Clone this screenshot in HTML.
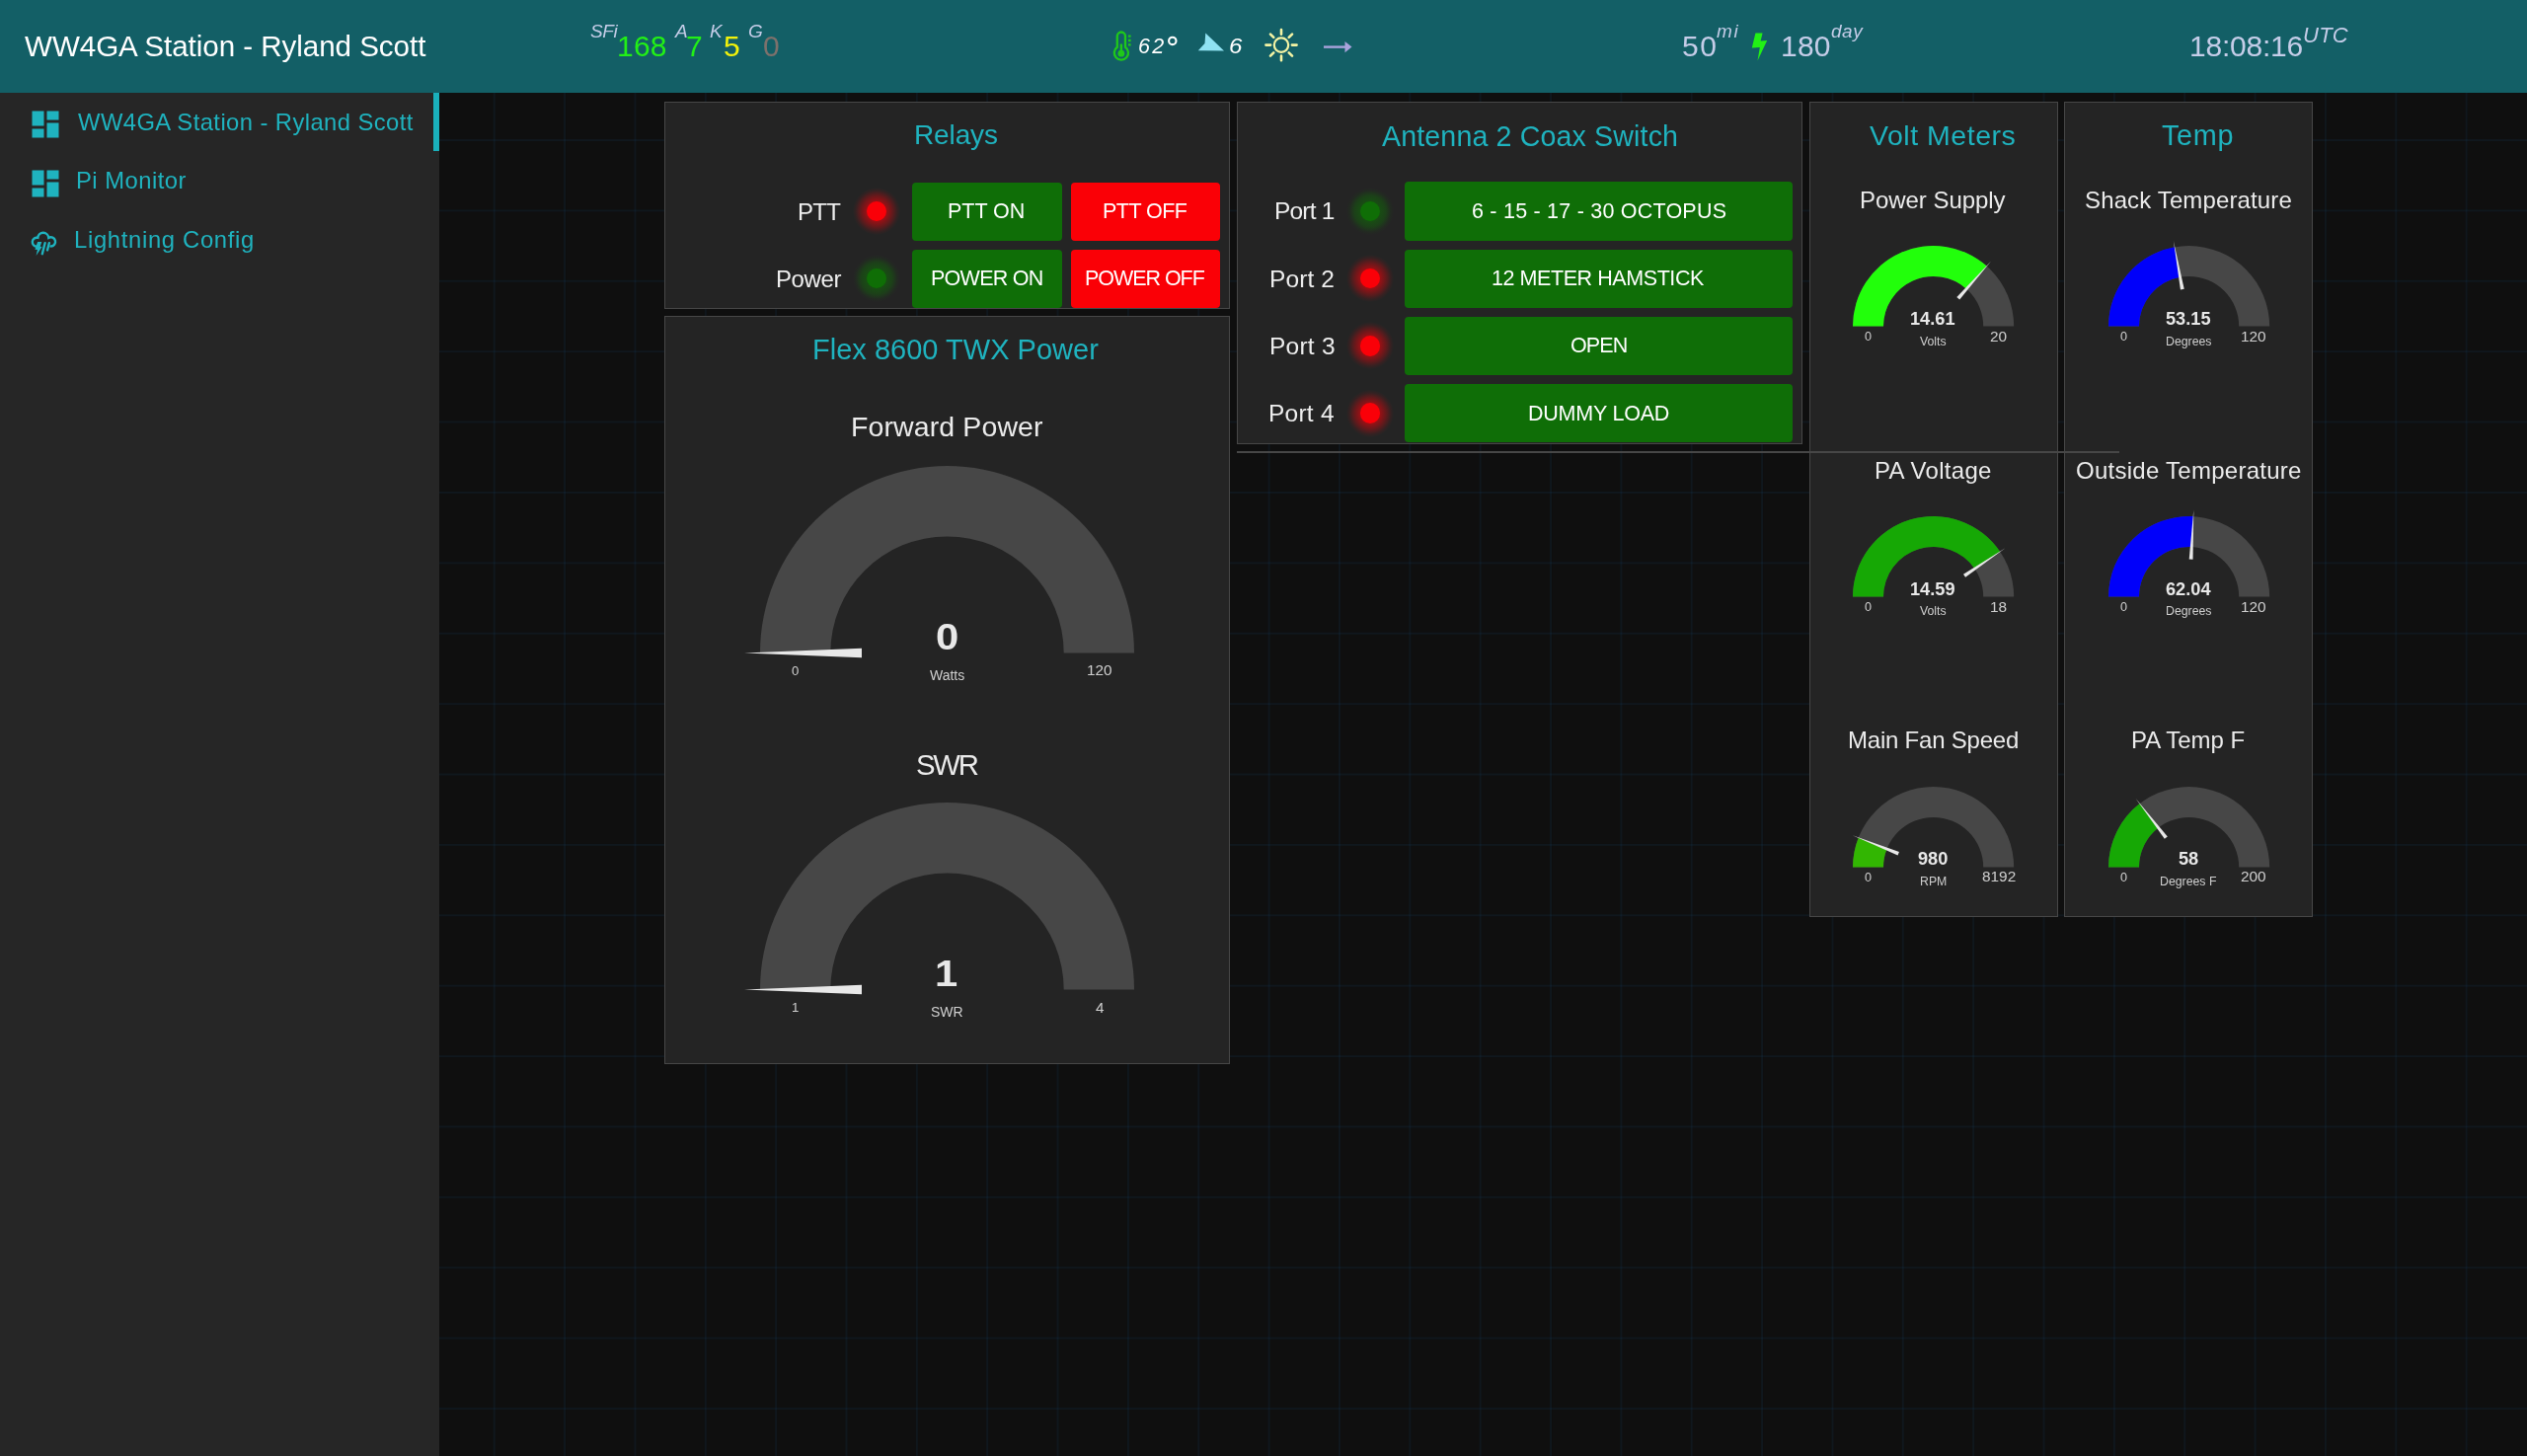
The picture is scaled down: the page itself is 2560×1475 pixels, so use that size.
<!DOCTYPE html>
<html><head><meta charset="utf-8"><title>WW4GA Station - Ryland Scott</title>
<style>
html,body{margin:0;padding:0;width:2560px;height:1475px;overflow:hidden;background:#0f0f0f;font-family:"Liberation Sans", sans-serif;}
.b{position:absolute;}
.t{position:absolute;white-space:nowrap;line-height:1;will-change:transform;}
</style></head><body>
<svg class="b" style="left:0;top:0" width="2560" height="1475"><g fill="rgb(20,80,120)" fill-opacity="0.13"><rect x="499.70" y="94" width="2" height="1381"/><rect x="571.05" y="94" width="2" height="1381"/><rect x="642.41" y="94" width="2" height="1381"/><rect x="713.76" y="94" width="2" height="1381"/><rect x="785.12" y="94" width="2" height="1381"/><rect x="856.48" y="94" width="2" height="1381"/><rect x="927.83" y="94" width="2" height="1381"/><rect x="999.19" y="94" width="2" height="1381"/><rect x="1070.54" y="94" width="2" height="1381"/><rect x="1141.89" y="94" width="2" height="1381"/><rect x="1213.25" y="94" width="2" height="1381"/><rect x="1284.61" y="94" width="2" height="1381"/><rect x="1355.96" y="94" width="2" height="1381"/><rect x="1427.32" y="94" width="2" height="1381"/><rect x="1498.67" y="94" width="2" height="1381"/><rect x="1570.03" y="94" width="2" height="1381"/><rect x="1641.38" y="94" width="2" height="1381"/><rect x="1712.74" y="94" width="2" height="1381"/><rect x="1784.09" y="94" width="2" height="1381"/><rect x="1855.45" y="94" width="2" height="1381"/><rect x="1926.80" y="94" width="2" height="1381"/><rect x="1998.16" y="94" width="2" height="1381"/><rect x="2069.51" y="94" width="2" height="1381"/><rect x="2140.87" y="94" width="2" height="1381"/><rect x="2212.22" y="94" width="2" height="1381"/><rect x="2283.58" y="94" width="2" height="1381"/><rect x="2354.93" y="94" width="2" height="1381"/><rect x="2426.29" y="94" width="2" height="1381"/><rect x="2497.64" y="94" width="2" height="1381"/><rect x="445" y="141.00" width="2115" height="2"/><rect x="445" y="212.39" width="2115" height="2"/><rect x="445" y="283.78" width="2115" height="2"/><rect x="445" y="355.17" width="2115" height="2"/><rect x="445" y="426.56" width="2115" height="2"/><rect x="445" y="497.95" width="2115" height="2"/><rect x="445" y="569.34" width="2115" height="2"/><rect x="445" y="640.73" width="2115" height="2"/><rect x="445" y="712.12" width="2115" height="2"/><rect x="445" y="783.51" width="2115" height="2"/><rect x="445" y="854.90" width="2115" height="2"/><rect x="445" y="926.29" width="2115" height="2"/><rect x="445" y="997.68" width="2115" height="2"/><rect x="445" y="1069.07" width="2115" height="2"/><rect x="445" y="1140.46" width="2115" height="2"/><rect x="445" y="1211.85" width="2115" height="2"/><rect x="445" y="1283.24" width="2115" height="2"/><rect x="445" y="1354.63" width="2115" height="2"/><rect x="445" y="1426.02" width="2115" height="2"/></g></svg>
<div class="b" style="left:0.00px;top:0.00px;width:2560.00px;height:94.00px;background:#135f66;"></div>
<div class="t" style="left:25.30px;top:32.34px;font-size:29.6px;color:#fff;font-style:normal;font-weight:normal;letter-spacing:-0.055px;">WW4GA Station - Ryland Scott</div>
<div class="t" style="left:598.13px;top:21.82px;font-size:19px;color:#c5cde8;font-style:italic;font-weight:normal;letter-spacing:-0.405px;">SFi</div>
<div class="t" style="left:625.00px;top:32.00px;font-size:30px;color:#22f016;font-style:normal;font-weight:normal;letter-spacing:0.2px;">168</div>
<div class="t" style="left:683.95px;top:21.82px;font-size:19px;color:#c5cde8;font-style:italic;font-weight:normal;letter-spacing:0px;">A</div>
<div class="t" style="left:695.30px;top:32.00px;font-size:30px;color:#22f016;font-style:normal;font-weight:normal;letter-spacing:0px;">7</div>
<div class="t" style="left:719.43px;top:21.82px;font-size:19px;color:#c5cde8;font-style:italic;font-weight:normal;letter-spacing:0px;">K</div>
<div class="t" style="left:733.00px;top:32.00px;font-size:30px;color:#f2f20a;font-style:normal;font-weight:normal;letter-spacing:0px;">5</div>
<div class="t" style="left:757.75px;top:21.82px;font-size:19px;color:#c5cde8;font-style:italic;font-weight:normal;letter-spacing:0px;">G</div>
<div class="t" style="left:772.50px;top:32.00px;font-size:30px;color:#7d716c;font-style:normal;font-weight:normal;letter-spacing:0px;">0</div>
<svg class="b" style="left:1120px;top:28px" width="36" height="40" viewBox="1120 28 36 40"><g fill="none" stroke="#1fc81a" stroke-width="2.3"><path d="M1131.8 47.8 V36.6 a4.1 4.1 0 0 1 8.2 0 V47.8 a7.1 7.1 0 1 1 -8.2 0 Z"/><path d="M1143 36.6h2.6M1143 41h2.6M1143 45.4h2.6"/></g><g fill="#1fc81a"><rect x="1134.7" y="44.5" width="2.4" height="9"/><circle cx="1135.9" cy="54.2" r="3.4"/></g></svg>
<div class="t" style="left:1153.21px;top:36.50px;font-size:21.5px;color:#fff;font-style:italic;font-weight:normal;letter-spacing:2.24px;">62</div>
<svg class="b" style="left:1180px;top:33px" width="16" height="16" viewBox="1180 33 16 16"><circle cx="1187.8" cy="41.4" r="3.7" fill="none" stroke="#fff" stroke-width="2.1"/></svg>
<svg class="b" style="left:1205px;top:28px" width="40" height="30" viewBox="1205 28 40 30"><path d="M1221.3 33.4 L1240 51.6 L1213.8 51.2 L1220.5 44 Z" fill="#8fe2f2"/></svg>
<div class="t" style="left:1244.96px;top:36.50px;font-size:21.5px;color:#fff;font-style:italic;font-weight:normal;letter-spacing:0px;transform:scaleX(1.12);transform-origin:0 0;">6</div>
<svg class="b" style="left:1275px;top:22px" width="46" height="48" viewBox="1275 22 46 48"><g fill="none" stroke="#f4f4a4" stroke-linecap="round"><circle cx="1298" cy="45.6" r="7.2" stroke-width="2.2"/><path d="M1308.90 45.60L1313.60 45.60M1305.71 53.31L1309.03 56.63M1298.00 56.50L1298.00 61.20M1290.29 53.31L1286.97 56.63M1287.10 45.60L1282.40 45.60M1290.29 37.89L1286.97 34.57M1298.00 34.70L1298.00 30.00M1305.71 37.89L1309.03 34.57" stroke-width="2.6"/></g></svg>
<svg class="b" style="left:1335px;top:36px" width="40" height="24" viewBox="1335 36 40 24"><path d="M1341 47.6 H1364" stroke="#a9a3dc" stroke-width="2.4"/><path d="M1362.5 41.9 L1369.5 47.6 L1362.5 53.3 Z" fill="#a9a3dc"/></svg>
<div class="t" style="left:1703.60px;top:32.00px;font-size:30px;color:#c5cde8;font-style:normal;font-weight:normal;letter-spacing:1.5px;">50</div>
<div class="t" style="left:1739.12px;top:21.82px;font-size:19px;color:#c5cde8;font-style:italic;font-weight:normal;letter-spacing:1.55px;">mi</div>
<svg class="b" style="left:1770px;top:30px" width="24" height="34" viewBox="1770 30 24 34"><path d="M1778.4 33.4 L1785.6 33.4 L1783.6 41.4 L1790.2 41 L1780.5 61.6 L1782.8 48 L1774.8 48.6 Z" fill="#22f016"/></svg>
<div class="t" style="left:1803.60px;top:32.00px;font-size:30px;color:#c5cde8;font-style:normal;font-weight:normal;letter-spacing:0.25px;">180</div>
<div class="t" style="left:1854.83px;top:21.82px;font-size:19px;color:#c5cde8;font-style:italic;font-weight:normal;letter-spacing:0.515px;">day</div>
<div class="t" style="left:2217.80px;top:31.90px;font-size:30px;color:#c5cde8;font-style:normal;font-weight:normal;letter-spacing:-0.214px;">18:08:16</div>
<div class="t" style="left:2333.46px;top:25.28px;font-size:22px;color:#c5cde8;font-style:italic;font-weight:normal;letter-spacing:0.26px;">UTC</div>
<div class="b" style="left:0.00px;top:94.00px;width:445.00px;height:1381.00px;background:#262626;"></div>
<div class="b" style="left:439.00px;top:94.00px;width:6.00px;height:59.00px;background:#1ab0bb;"></div>
<svg class="b" style="left:28.1px;top:108.35px" width="36" height="36" viewBox="0 0 24 24"><path d="M13,3V9H21V3M13,21H21V11H13M3,21H11V15H3M3,13H11V3H3V13Z" fill="#1fb3bf"/></svg>
<svg class="b" style="left:28.1px;top:167.9px" width="36" height="36" viewBox="0 0 24 24"><path d="M13,3V9H21V3M13,21H21V11H13M3,21H11V15H3M3,13H11V3H3V13Z" fill="#1fb3bf"/></svg>
<svg class="b" style="left:26px;top:228px" width="40" height="36" viewBox="26 228 40 36"><g fill="none" stroke="#1fb3bf" stroke-width="2.4" stroke-linecap="round"><path d="M37.3 249.7 A4.5 4.5 0 1 1 38.32 240.82 A5.5 5.5 0 0 1 49.28 240.87 A4.6 4.6 0 1 1 51.5 249.5"/><path d="M45.6 246.2 L42.8 257.2 M49.8 246.2 L48 253.4"/></g><path d="M38.1 245.0 H42.3 L40.7 249.7 L42.6 250.1 L36.6 259.0 L37.9 252.9 L35.4 252.7 Z" fill="#1fb3bf"/></svg>
<div class="t" style="left:78.50px;top:112.25px;font-size:23.8px;color:#1fb3bf;font-style:normal;font-weight:normal;letter-spacing:0.421px;">WW4GA Station - Ryland Scott</div>
<div class="t" style="left:76.90px;top:171.45px;font-size:23.8px;color:#1fb3bf;font-style:normal;font-weight:normal;letter-spacing:0.471px;">Pi Monitor</div>
<div class="t" style="left:74.50px;top:230.85px;font-size:23.8px;color:#1fb3bf;font-style:normal;font-weight:normal;letter-spacing:0.686px;">Lightning Config</div>
<div class="b" style="left:673.00px;top:103.10px;width:573.20px;height:210.30px;background:#242424;border:1px solid #474747;box-sizing:border-box;"></div>
<div class="b" style="left:673.00px;top:320.10px;width:573.20px;height:757.50px;background:#242424;border:1px solid #474747;box-sizing:border-box;"></div>
<div class="b" style="left:1252.60px;top:103.10px;width:573.50px;height:347.10px;background:#242424;border:1px solid #474747;box-sizing:border-box;"></div>
<div class="b" style="left:1832.50px;top:103.10px;width:252.10px;height:826.10px;background:#242424;border:1px solid #474747;box-sizing:border-box;"></div>
<div class="b" style="left:2091.20px;top:103.10px;width:252.10px;height:826.10px;background:#242424;border:1px solid #474747;box-sizing:border-box;"></div>
<div class="b" style="left:1253.00px;top:457.00px;width:894.00px;height:2.00px;background:#474747;"></div>
<div class="t" style="left:926.06px;top:123.30px;font-size:28px;color:#1fb3bf;font-style:normal;font-weight:normal;letter-spacing:-0.124px;">Relays</div>
<div class="t" style="left:808.38px;top:202.98px;font-size:24px;color:#eee;font-style:normal;font-weight:normal;letter-spacing:-0.73px;">PTT</div>
<div class="t" style="left:785.78px;top:271.28px;font-size:24px;color:#eee;font-style:normal;font-weight:normal;letter-spacing:-0.415px;">Power</div>
<div class="b" style="left:864.20px;top:189.80px;width:48.00px;height:48.00px;background:radial-gradient(circle closest-side, rgba(250,0,8,0.55) 10px, rgba(250,0,8,0.3) 16px, rgba(250,0,8,0.08) 21px, rgba(250,0,8,0) 24px);"></div>
<div class="b" style="left:878.00px;top:203.60px;width:20.40px;height:20.40px;background:#fa0008;border-radius:50%;"></div>
<div class="b" style="left:864.20px;top:258.00px;width:48.00px;height:48.00px;background:radial-gradient(circle closest-side, rgba(15,110,6,0.55) 10px, rgba(15,110,6,0.38) 16px, rgba(15,110,6,0.08) 21px, rgba(15,110,6,0) 24px);"></div>
<div class="b" style="left:878.00px;top:271.80px;width:20.40px;height:20.40px;background:#0f6e06;border-radius:50%;"></div>
<div class="b" style="left:923.90px;top:184.50px;width:151.70px;height:59.40px;background:#0f6e07;border-radius:4px;"></div>
<div class="t" style="left:960.48px;top:203.60px;font-size:21.5px;color:#fff;font-style:normal;font-weight:normal;letter-spacing:-0.047px;">PTT ON</div>
<div class="b" style="left:1084.50px;top:184.50px;width:151.70px;height:59.40px;background:#fa0006;border-radius:4px;"></div>
<div class="t" style="left:1116.88px;top:203.50px;font-size:21.5px;color:#fff;font-style:normal;font-weight:normal;letter-spacing:-0.541px;">PTT OFF</div>
<div class="b" style="left:923.90px;top:253.00px;width:151.70px;height:59.40px;background:#0f6e07;border-radius:4px;"></div>
<div class="t" style="left:942.68px;top:271.90px;font-size:21.5px;color:#fff;font-style:normal;font-weight:normal;letter-spacing:-0.726px;">POWER ON</div>
<div class="b" style="left:1084.50px;top:253.00px;width:151.70px;height:59.40px;background:#fa0006;border-radius:4px;"></div>
<div class="t" style="left:1099.18px;top:271.90px;font-size:21.5px;color:#fff;font-style:normal;font-weight:normal;letter-spacing:-1.049px;">POWER OFF</div>
<div class="t" style="left:1399.70px;top:123.59px;font-size:28.6px;color:#1fb3bf;font-style:normal;font-weight:normal;letter-spacing:0.138px;">Antenna 2 Coax Switch</div>
<div class="t" style="left:1291.04px;top:202.46px;font-size:24.5px;color:#eee;font-style:normal;font-weight:normal;letter-spacing:-0.806px;">Port 1</div>
<div class="b" style="left:1364.00px;top:190.00px;width:48.00px;height:48.00px;background:radial-gradient(circle closest-side, rgba(15,110,6,0.55) 10px, rgba(15,110,6,0.38) 16px, rgba(15,110,6,0.08) 21px, rgba(15,110,6,0) 24px);"></div>
<div class="b" style="left:1377.80px;top:203.80px;width:20.40px;height:20.40px;background:#0f6e06;border-radius:50%;"></div>
<div class="b" style="left:1423.00px;top:184.40px;width:392.80px;height:59.40px;background:#0f6e07;border-radius:4px;"></div>
<div class="t" style="left:1490.52px;top:203.60px;font-size:21.5px;color:#fff;font-style:normal;font-weight:normal;letter-spacing:0.222px;">6 - 15 - 17 - 30 OCTOPUS</div>
<div class="t" style="left:1286.44px;top:270.69px;font-size:24.5px;color:#eee;font-style:normal;font-weight:normal;letter-spacing:0.114px;">Port 2</div>
<div class="b" style="left:1364.00px;top:258.20px;width:48.00px;height:48.00px;background:radial-gradient(circle closest-side, rgba(250,0,8,0.55) 10px, rgba(250,0,8,0.3) 16px, rgba(250,0,8,0.08) 21px, rgba(250,0,8,0) 24px);"></div>
<div class="b" style="left:1377.80px;top:272.00px;width:20.40px;height:20.40px;background:#fa0008;border-radius:50%;"></div>
<div class="b" style="left:1423.00px;top:252.63px;width:392.80px;height:59.40px;background:#0f6e07;border-radius:4px;"></div>
<div class="t" style="left:1511.48px;top:271.97px;font-size:21.5px;color:#fff;font-style:normal;font-weight:normal;letter-spacing:-0.429px;">12 METER HAMSTICK</div>
<div class="t" style="left:1285.84px;top:338.92px;font-size:24.5px;color:#eee;font-style:normal;font-weight:normal;letter-spacing:0.234px;">Port 3</div>
<div class="b" style="left:1364.00px;top:326.40px;width:48.00px;height:48.00px;background:radial-gradient(circle closest-side, rgba(250,0,8,0.55) 10px, rgba(250,0,8,0.3) 16px, rgba(250,0,8,0.08) 21px, rgba(250,0,8,0) 24px);"></div>
<div class="b" style="left:1377.80px;top:340.20px;width:20.40px;height:20.40px;background:#fa0008;border-radius:50%;"></div>
<div class="b" style="left:1423.00px;top:320.86px;width:392.80px;height:59.40px;background:#0f6e07;border-radius:4px;"></div>
<div class="t" style="left:1590.72px;top:340.34px;font-size:21.5px;color:#fff;font-style:normal;font-weight:normal;letter-spacing:-0.883px;">OPEN</div>
<div class="t" style="left:1285.34px;top:407.15px;font-size:24.5px;color:#eee;font-style:normal;font-weight:normal;letter-spacing:0.236px;">Port 4</div>
<div class="b" style="left:1364.00px;top:394.60px;width:48.00px;height:48.00px;background:radial-gradient(circle closest-side, rgba(250,0,8,0.55) 10px, rgba(250,0,8,0.3) 16px, rgba(250,0,8,0.08) 21px, rgba(250,0,8,0) 24px);"></div>
<div class="b" style="left:1377.80px;top:408.40px;width:20.40px;height:20.40px;background:#fa0008;border-radius:50%;"></div>
<div class="b" style="left:1423.00px;top:389.09px;width:392.80px;height:59.40px;background:#0f6e07;border-radius:4px;"></div>
<div class="t" style="left:1547.88px;top:408.71px;font-size:21.5px;color:#fff;font-style:normal;font-weight:normal;letter-spacing:-0.229px;">DUMMY LOAD</div>
<div class="t" style="left:823.08px;top:340.05px;font-size:29px;color:#1fb3bf;font-style:normal;font-weight:normal;letter-spacing:0.016px;">Flex 8600 TWX Power</div>
<div class="t" style="left:861.72px;top:418.07px;font-size:28.5px;color:#ebebeb;font-style:normal;font-weight:normal;letter-spacing:0.111px;">Forward Power</div>
<svg class="b" style="left:739.90px;top:442.00px" width="439.00" height="249.50" viewBox="739.90 442.00 439.00 249.50"><path d="M769.90 661.50 A189.5 189.5 0 0 1 1148.90 661.50 L1077.60 661.50 A118.2 118.2 0 0 0 841.20 661.50 Z" fill="#474747"/><path d="M872.90 656.75 L753.90 661.50 L872.90 666.25 Z" fill="#e8e8e8"/></svg>
<div class="t" style="left:947.91px;top:627.93px;font-size:36px;color:#e8e8e8;font-style:normal;font-weight:bold;letter-spacing:0px;transform:scaleX(1.16);transform-origin:0 0;">0</div>
<div class="t" style="left:942.04px;top:676.75px;font-size:14px;color:#cfcfcf;font-style:normal;font-weight:normal;letter-spacing:0px;">Watts</div>
<div class="t" style="left:801.90px;top:672.63px;font-size:13.2px;color:#cfcfcf;font-style:normal;font-weight:normal;letter-spacing:0px;">0</div>
<div class="t" style="left:1101.02px;top:671.35px;font-size:15.3px;color:#cfcfcf;font-style:normal;font-weight:normal;letter-spacing:0px;">120</div>
<div class="t" style="left:928.23px;top:759.90px;font-size:29.3px;color:#ebebeb;font-style:normal;font-weight:normal;letter-spacing:-2.169px;">SWR</div>
<svg class="b" style="left:739.90px;top:783.20px" width="439.00" height="249.50" viewBox="739.90 783.20 439.00 249.50"><path d="M769.90 1002.70 A189.5 189.5 0 0 1 1148.90 1002.70 L1077.60 1002.70 A118.2 118.2 0 0 0 841.20 1002.70 Z" fill="#474747"/><path d="M872.90 997.95 L753.90 1002.70 L872.90 1007.45 Z" fill="#e8e8e8"/></svg>
<div class="t" style="left:947.28px;top:969.13px;font-size:36px;color:#e8e8e8;font-style:normal;font-weight:bold;letter-spacing:0px;transform:scaleX(1.16);transform-origin:0 0;">1</div>
<div class="t" style="left:943.09px;top:1017.95px;font-size:14px;color:#cfcfcf;font-style:normal;font-weight:normal;letter-spacing:0px;">SWR</div>
<div class="t" style="left:801.71px;top:1013.83px;font-size:13.2px;color:#cfcfcf;font-style:normal;font-weight:normal;letter-spacing:0px;">1</div>
<div class="t" style="left:1109.89px;top:1012.55px;font-size:15.3px;color:#cfcfcf;font-style:normal;font-weight:normal;letter-spacing:0px;">4</div>
<div class="t" style="left:1894.41px;top:122.87px;font-size:28.5px;color:#1fb3bf;font-style:normal;font-weight:normal;letter-spacing:0.522px;">Volt Meters</div>
<div class="t" style="left:2190.22px;top:122.62px;font-size:28.8px;color:#1fb3bf;font-style:normal;font-weight:normal;letter-spacing:0.689px;">Temp</div>
<div class="t" style="left:1883.73px;top:190.98px;font-size:24px;color:#ebebeb;font-style:normal;font-weight:normal;letter-spacing:-0.042px;">Power Supply</div>
<svg class="b" style="left:1846.90px;top:219.40px" width="223.20" height="141.60" viewBox="1846.90 219.40 223.20 141.60"><path d="M1876.90 331.00 A81.6 81.6 0 0 1 2040.10 331.00 L2009.10 331.00 A50.6 50.6 0 0 0 1907.90 331.00 Z" fill="#474747"/><path d="M1876.90 331.00 A81.6 81.6 0 0 1 2012.56 269.88 L1992.02 293.10 A50.6 50.6 0 0 0 1907.90 331.00 Z" fill="#22ff0b"/><path d="M1985.10 303.79 L2016.80 265.08 L1982.25 301.28 Z" fill="#e8e8e8"/></svg>
<div class="t" style="left:1935.39px;top:314.19px;font-size:18.2px;color:#e8e8e8;font-style:normal;font-weight:bold;letter-spacing:0px;">14.61</div>
<div class="t" style="left:1945.34px;top:339.59px;font-size:12.3px;color:#cfcfcf;font-style:normal;font-weight:normal;letter-spacing:0px;">Volts</div>
<div class="t" style="left:1888.87px;top:335.23px;font-size:12.6px;color:#cfcfcf;font-style:normal;font-weight:normal;letter-spacing:0px;">0</div>
<div class="t" style="left:2015.90px;top:332.86px;font-size:15.4px;color:#cfcfcf;font-style:normal;font-weight:normal;letter-spacing:0px;">20</div>
<div class="t" style="left:2112.30px;top:190.98px;font-size:24px;color:#ebebeb;font-style:normal;font-weight:normal;letter-spacing:0.135px;">Shack Temperature</div>
<svg class="b" style="left:2105.70px;top:219.40px" width="223.20" height="141.60" viewBox="2105.70 219.40 223.20 141.60"><path d="M2135.70 331.00 A81.6 81.6 0 0 1 2298.90 331.00 L2267.90 331.00 A50.6 50.6 0 0 0 2166.70 331.00 Z" fill="#474747"/><path d="M2135.70 331.00 A81.6 81.6 0 0 1 2202.74 250.71 L2208.27 281.21 A50.6 50.6 0 0 0 2166.70 331.00 Z" fill="#0000fa"/><path d="M2212.39 293.27 L2201.60 244.41 L2208.65 293.95 Z" fill="#e8e8e8"/></svg>
<div class="t" style="left:2194.46px;top:314.19px;font-size:18.2px;color:#e8e8e8;font-style:normal;font-weight:bold;letter-spacing:0px;">53.15</div>
<div class="t" style="left:2193.81px;top:339.59px;font-size:12.3px;color:#cfcfcf;font-style:normal;font-weight:normal;letter-spacing:0px;">Degrees</div>
<div class="t" style="left:2147.67px;top:335.23px;font-size:12.6px;color:#cfcfcf;font-style:normal;font-weight:normal;letter-spacing:0px;">0</div>
<div class="t" style="left:2270.23px;top:332.86px;font-size:15.4px;color:#cfcfcf;font-style:normal;font-weight:normal;letter-spacing:0px;">120</div>
<div class="t" style="left:1898.93px;top:464.63px;font-size:24px;color:#ebebeb;font-style:normal;font-weight:normal;letter-spacing:0.304px;">PA Voltage</div>
<svg class="b" style="left:1846.90px;top:493.05px" width="223.20" height="141.60" viewBox="1846.90 493.05 223.20 141.60"><path d="M1876.90 604.65 A81.6 81.6 0 0 1 2040.10 604.65 L2009.10 604.65 A50.6 50.6 0 0 0 1907.90 604.65 Z" fill="#474747"/><path d="M1876.90 604.65 A81.6 81.6 0 0 1 2026.07 558.90 L2000.40 576.28 A50.6 50.6 0 0 0 1907.90 604.65 Z" fill="#16a805"/><path d="M1991.03 584.92 L2031.37 555.31 L1988.90 581.77 Z" fill="#e8e8e8"/></svg>
<div class="t" style="left:1935.48px;top:587.84px;font-size:18.2px;color:#e8e8e8;font-style:normal;font-weight:bold;letter-spacing:0px;">14.59</div>
<div class="t" style="left:1945.34px;top:613.24px;font-size:12.3px;color:#cfcfcf;font-style:normal;font-weight:normal;letter-spacing:0px;">Volts</div>
<div class="t" style="left:1888.87px;top:608.88px;font-size:12.6px;color:#cfcfcf;font-style:normal;font-weight:normal;letter-spacing:0px;">0</div>
<div class="t" style="left:2015.74px;top:606.51px;font-size:15.4px;color:#cfcfcf;font-style:normal;font-weight:normal;letter-spacing:0px;">18</div>
<div class="t" style="left:2103.10px;top:464.63px;font-size:24px;color:#ebebeb;font-style:normal;font-weight:normal;letter-spacing:0.262px;">Outside Temperature</div>
<svg class="b" style="left:2105.70px;top:493.05px" width="223.20" height="141.60" viewBox="2105.70 493.05 223.20 141.60"><path d="M2135.70 604.65 A81.6 81.6 0 0 1 2298.90 604.65 L2267.90 604.65 A50.6 50.6 0 0 0 2166.70 604.65 Z" fill="#474747"/><path d="M2135.70 604.65 A81.6 81.6 0 0 1 2221.66 523.17 L2220.00 554.12 A50.6 50.6 0 0 0 2166.70 604.65 Z" fill="#0000fa"/><path d="M2221.23 566.81 L2222.00 516.78 L2217.43 566.60 Z" fill="#e8e8e8"/></svg>
<div class="t" style="left:2194.19px;top:587.84px;font-size:18.2px;color:#e8e8e8;font-style:normal;font-weight:bold;letter-spacing:0px;">62.04</div>
<div class="t" style="left:2193.81px;top:613.24px;font-size:12.3px;color:#cfcfcf;font-style:normal;font-weight:normal;letter-spacing:0px;">Degrees</div>
<div class="t" style="left:2147.67px;top:608.88px;font-size:12.6px;color:#cfcfcf;font-style:normal;font-weight:normal;letter-spacing:0px;">0</div>
<div class="t" style="left:2270.23px;top:606.51px;font-size:15.4px;color:#cfcfcf;font-style:normal;font-weight:normal;letter-spacing:0px;">120</div>
<div class="t" style="left:1871.73px;top:738.28px;font-size:24px;color:#ebebeb;font-style:normal;font-weight:normal;letter-spacing:-0.22px;">Main Fan Speed</div>
<svg class="b" style="left:1846.90px;top:766.70px" width="223.20" height="141.60" viewBox="1846.90 766.70 223.20 141.60"><path d="M1876.90 878.30 A81.6 81.6 0 0 1 2040.10 878.30 L2009.10 878.30 A50.6 50.6 0 0 0 1907.90 878.30 Z" fill="#474747"/><path d="M1876.90 878.30 A81.6 81.6 0 0 1 1882.60 848.35 L1911.43 859.73 A50.6 50.6 0 0 0 1907.90 878.30 Z" fill="#32b602"/><path d="M1923.85 862.59 L1876.64 846.00 L1922.45 866.12 Z" fill="#e8e8e8"/></svg>
<div class="t" style="left:1943.39px;top:861.49px;font-size:18.2px;color:#e8e8e8;font-style:normal;font-weight:bold;letter-spacing:0px;">980</div>
<div class="t" style="left:1944.85px;top:886.89px;font-size:12.3px;color:#cfcfcf;font-style:normal;font-weight:normal;letter-spacing:0px;">RPM</div>
<div class="t" style="left:1888.87px;top:882.53px;font-size:12.6px;color:#cfcfcf;font-style:normal;font-weight:normal;letter-spacing:0px;">0</div>
<div class="t" style="left:2007.51px;top:880.16px;font-size:15.4px;color:#cfcfcf;font-style:normal;font-weight:normal;letter-spacing:0px;">8192</div>
<div class="t" style="left:2159.18px;top:738.28px;font-size:24px;color:#ebebeb;font-style:normal;font-weight:normal;letter-spacing:0.01px;">PA Temp F</div>
<svg class="b" style="left:2105.70px;top:766.70px" width="223.20" height="141.60" viewBox="2105.70 766.70 223.20 141.60"><path d="M2135.70 878.30 A81.6 81.6 0 0 1 2298.90 878.30 L2267.90 878.30 A50.6 50.6 0 0 0 2166.70 878.30 Z" fill="#474747"/><path d="M2135.70 878.30 A81.6 81.6 0 0 1 2167.29 813.82 L2186.29 838.32 A50.6 50.6 0 0 0 2166.70 878.30 Z" fill="#16a805"/><path d="M2195.51 847.11 L2163.36 808.77 L2192.51 849.44 Z" fill="#e8e8e8"/></svg>
<div class="t" style="left:2207.11px;top:861.49px;font-size:18.2px;color:#e8e8e8;font-style:normal;font-weight:bold;letter-spacing:0px;">58</div>
<div class="t" style="left:2188.33px;top:886.89px;font-size:12.3px;color:#cfcfcf;font-style:normal;font-weight:normal;letter-spacing:0px;">Degrees F</div>
<div class="t" style="left:2147.67px;top:882.53px;font-size:12.6px;color:#cfcfcf;font-style:normal;font-weight:normal;letter-spacing:0px;">0</div>
<div class="t" style="left:2270.46px;top:880.16px;font-size:15.4px;color:#cfcfcf;font-style:normal;font-weight:normal;letter-spacing:0px;">200</div>
</body></html>
